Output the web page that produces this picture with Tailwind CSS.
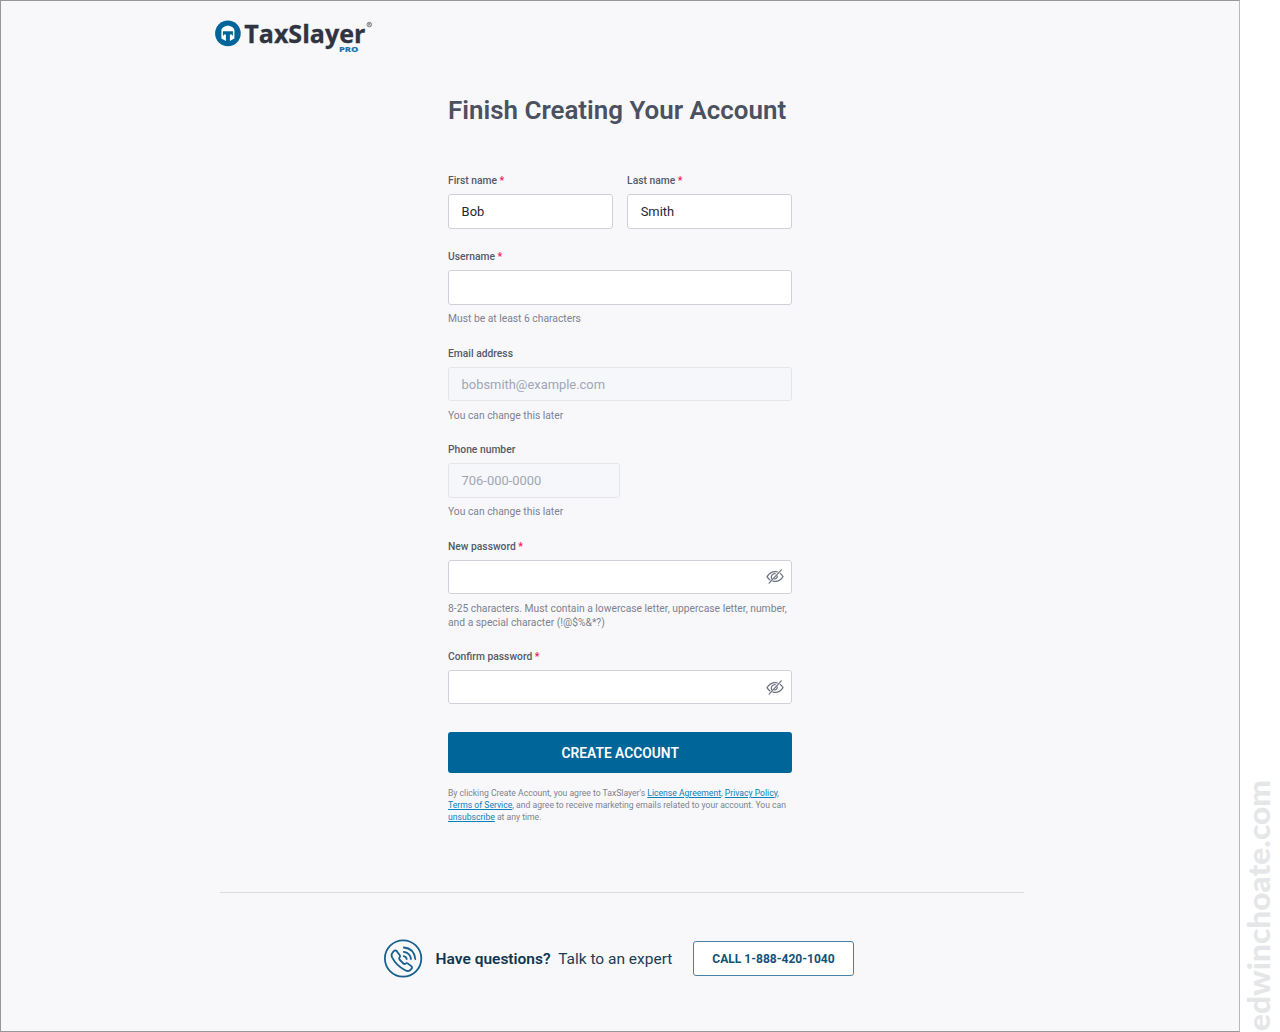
<!DOCTYPE html>
<html lang="en">
<head>
<meta charset="utf-8">
<title>Finish Creating Your Account</title>
<script src="https://cdn.jsdelivr.net/npm/@tailwindcss/browser@4"></script>
</head>
<body class="bg-white font-[Roboto,sans-serif] overflow-hidden">
<div class="flex h-[1032px] w-[1280px]">
  <main class="flex h-full w-[1240.4px] flex-col border border-[#97979b] bg-[#f8f8fb] border-r-[#b9b9bd]">
    <header class="flex h-[60px] pt-[19px] pl-[214px]">
      <svg class="overflow-visible" width="160" height="36" viewBox="0 0 160 36" role="img" aria-label="TaxSlayer Pro">
        <circle cx="12.9" cy="13.4" r="12.8" fill="#006699"/>
        <path d="M6.4 10.1Q6.9 6.7 12.9 5.6Q18.9 6.7 19.4 10.1V18.6L14.9 21.1V14.4H16.9V15.4H17.9V11.3H7.9V15.4H8.9V14.4H10.9V21.1L6.4 18.6Z" fill="#fff"/>
        <text x="29.3" y="22.8" font-family="Open Sans,sans-serif" font-weight="700" font-size="25.5" textLength="121" lengthAdjust="spacingAndGlyphs" fill="#2f3440" stroke="#2f3440" stroke-width=".3">TaxSlayer</text>
        <text x="124" y="31.8" font-family="Open Sans,sans-serif" font-weight="800" font-size="7.2" textLength="19.5" lengthAdjust="spacingAndGlyphs" fill="#1a76ad">PRO</text>
        <circle cx="154.3" cy="4.6" r="2.3" fill="none" stroke="#62656d" stroke-width=".8"/>
        <text x="152.9" y="6.2" font-family="Lato,sans-serif" font-weight="700" font-size="4.2" fill="#62656d">R</text>
      </svg>
    </header>
    <form class="ml-[447px] flex w-[344.4px] flex-col pt-[33px]">
      <h1 class="h-[32px] whitespace-nowrap text-[25.93px] leading-[32px] font-semibold text-[#4b5160]">Finish Creating Your Account</h1>
      <div class="mt-[48.4px] flex gap-[13.8px]">
        <div class="flex flex-1 flex-col gap-[6px]">
          <label class="text-[10.3px] leading-[14px] font-medium text-[#555a68]">First name <span class="font-bold text-[#f5195b]">*</span></label>
          <div class="flex h-[34.7px] items-center rounded-[3px] border border-[#cfd1d9] bg-white px-[12.6px] text-[12.9px] text-[#1f2733]">Bob</div>
        </div>
        <div class="flex flex-1 flex-col gap-[6px]">
          <label class="text-[10.3px] leading-[14px] font-medium text-[#555a68]">Last name <span class="font-bold text-[#f5195b]">*</span></label>
          <div class="flex h-[34.7px] items-center rounded-[3px] border border-[#cfd1d9] bg-white px-[12.6px] text-[12.9px] text-[#1f2733]">Smith</div>
        </div>
      </div>
      <div class="mt-[21.2px] flex flex-col">
        <label class="text-[10.3px] leading-[14px] font-medium text-[#555a68]">Username <span class="font-bold text-[#f5195b]">*</span></label>
        <div class="mt-[6px] h-[34.5px] rounded-[3px] border border-[#cfd1d9] bg-white"></div>
        <p class="mt-[7.4px] text-[10.3px] leading-[14px] text-[#7d828f]">Must be at least 6 characters</p>
      </div>
      <div class="mt-[20.6px] flex flex-col">
        <label class="text-[10.3px] leading-[14px] font-medium text-[#555a68]">Email address</label>
        <div class="mt-[6px] flex h-[34.5px] items-center rounded-[3px] border border-[#e3e5ea] bg-[#f6f7fa] px-[12.6px] pt-px text-[12.9px] text-[#a0a6b3]">bobsmith@example.com</div>
        <p class="mt-[7.6px] text-[10.3px] leading-[14px] text-[#7d828f]">You can change this later</p>
      </div>
      <div class="mt-[20.4px] flex flex-col">
        <label class="text-[10.3px] leading-[14px] font-medium text-[#555a68]">Phone number</label>
        <div class="mt-[6px] flex h-[34.5px] w-[172px] items-center rounded-[3px] border border-[#e3e5ea] bg-[#f6f7fa] px-[12.6px] pt-px text-[12.9px] text-[#a0a6b3]">706-000-0000</div>
        <p class="mt-[7.2px] text-[10.3px] leading-[14px] text-[#7d828f]">You can change this later</p>
      </div>
      <div class="mt-[20.8px] flex flex-col">
        <label class="text-[10.3px] leading-[14px] font-medium text-[#555a68]">New password <span class="font-bold text-[#f5195b]">*</span></label>
        <div class="mt-[6px] flex h-[34.5px] items-center justify-end rounded-[3px] border border-[#cfd1d9] bg-white pr-[7.5px]">
          <svg width="18" height="15" viewBox="0 0 18 15" fill="none" stroke="#6d7280" stroke-width="1.2" stroke-linecap="round"><path d="M11.2 2.8C6.8 2 3.2 4.2 1 7.6C1.8 9 2.8 10.1 4 10.9M7 12.1C11.5 12.9 15 11 17 7.6C16.3 6.3 15.4 5.3 14.3 4.5M5.6 9.6C4.6 7.2 6.4 4.5 9.2 4.7M8.6 10C10.2 9.8 11.2 8.8 11.3 7.2M15.3.8L3.2 14.2"/></svg>
        </div>
        <p class="mt-[7.6px] whitespace-nowrap text-[10.3px] leading-[14px] text-[#7d828f]">8-25 characters. Must contain a lowercase letter, uppercase letter, number,<br>and a special character (!@$%&amp;*?)</p>
      </div>
      <div class="mt-[20px] flex flex-col">
        <label class="text-[10.3px] leading-[14px] font-medium text-[#555a68]">Confirm password <span class="font-bold text-[#f5195b]">*</span></label>
        <div class="mt-[6px] flex h-[34.5px] items-center justify-end rounded-[3px] border border-[#cfd1d9] bg-white pr-[7.5px]">
          <svg width="18" height="15" viewBox="0 0 18 15" fill="none" stroke="#6d7280" stroke-width="1.2" stroke-linecap="round"><path d="M11.2 2.8C6.8 2 3.2 4.2 1 7.6C1.8 9 2.8 10.1 4 10.9M7 12.1C11.5 12.9 15 11 17 7.6C16.3 6.3 15.4 5.3 14.3 4.5M5.6 9.6C4.6 7.2 6.4 4.5 9.2 4.7M8.6 10C10.2 9.8 11.2 8.8 11.3 7.2M15.3.8L3.2 14.2"/></svg>
        </div>
      </div>
      <button type="button" class="mt-[27.5px] h-[41px] rounded-[3px] bg-[#006699] pt-[2px] text-[13.8px] font-semibold text-white">CREATE ACCOUNT</button>
      <p class="mt-[13.8px] whitespace-nowrap text-[8.6px] leading-[12px] text-[#7d828f]">By clicking Create Account, you agree to TaxSlayer's <a class="text-[#0b80bb] underline">License Agreement</a>, <a class="text-[#0b80bb] underline">Privacy Policy</a>,<br><a class="text-[#0b80bb] underline">Terms of Service</a>, and agree to receive marketing emails related to your account. You can<br><a class="text-[#0b80bb] underline">unsubscribe</a> at any time.</p>
    </form>
    <footer class="mt-[69px] ml-[219px] flex w-[804px] items-center border-t border-[#dadbe0] pt-[46px] pl-[164px]">
      <svg width="39" height="39" viewBox="0 0 39 39" fill="none" stroke="#17618f" stroke-width="1.8" stroke-linecap="round" stroke-linejoin="round">
        <circle cx="19.1" cy="19.5" r="18.2"/>
        <path d="M12.7 12.1L15.8 16.2Q16.6 17.5 15.3 18.8Q14.8 19.6 15.5 20.5L19.5 24.6Q20.5 25.5 21.7 24.6Q22.8 23.7 24 24.6L27.5 27.4Q28.7 28.7 27.4 29.9L25.7 31.5Q23.8 32.6 21.2 31.2Q12.2 26.5 8.1 18.3Q6.8 15.5 8.4 13.8L9.8 12.2Q11.5 10.7 12.7 12.1Z"/>
        <path d="M19.8 17.1Q22.2 17.5 22.7 20M19.8 12.8Q26 13.5 27 20M19.8 8.5Q30 9.3 31.3 20"/>
      </svg>
      <p class="ml-[12.6px] w-[257.4px] whitespace-nowrap pt-px text-[15.5px] leading-[20px] text-[#163f55]"><span class="mr-[7.5px] font-semibold text-[#10374d]">Have questions?</span>Talk to an expert</p>
      <div class="flex h-[35px] w-[161px] items-center justify-center rounded-[3px] border border-[#4583a5] bg-white pt-[2px] text-[12.05px] font-bold text-[#105378]">CALL 1-888-420-1040</div>
    </footer>
  </main>
  <aside class="flex flex-1 items-end">
    <svg width="39" height="262" viewBox="0 0 39 262"><text transform="translate(29.8 261) rotate(-90)" font-family="Lato,sans-serif" font-weight="900" font-size="30" textLength="251" lengthAdjust="spacingAndGlyphs" fill="#e5e6e8">edwinchoate.com</text></svg>
  </aside>
</div>
</body>
</html>
